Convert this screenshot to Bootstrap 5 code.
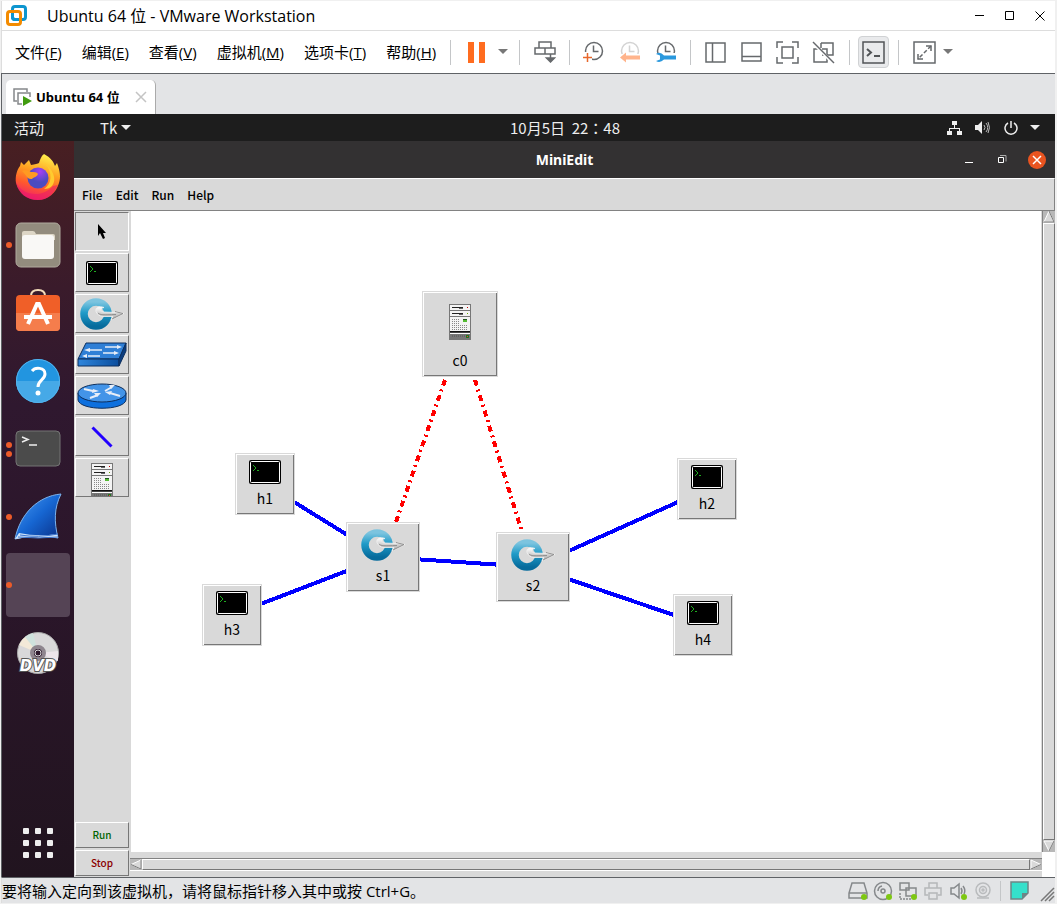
<!DOCTYPE html>
<html lang="zh-CN">
<head>
<meta charset="utf-8">
<meta name="viewport" content="width=device-width, initial-scale=1">
<title>Ubuntu 64 位 - VMware Workstation</title>
<link href="https://cdn.jsdelivr.net/npm/bootstrap@5.3.0/dist/css/bootstrap.min.css" rel="stylesheet">
<style>
:root{--tkbg:#d9d9d9;--win:"Open Sans","Noto Sans CJK SC",sans-serif;--gnome:"Noto Sans CJK SC",sans-serif}
body{background:#f0f0f0;font-family:var(--win);font-size:15px;line-height:20px;color:#000}
svg{display:block;flex:none}
button{background:none;border:0;padding:0;color:inherit}
.vm-app{margin-right:2px;margin-left:1px;padding:1px 0}
.vm-top{background:#fff;border-left:1px solid #ddd}
.vm-title{height:29px;padding-left:4px}
.vm-title .cap{padding-left:20px;font-size:16px}
.cap-btn{width:30px;height:28px;display:grid;place-items:center}
.vm-bar{height:43px;border-top:1px solid #ddd;padding-left:13px}
.vm-menu{gap:20px;width:435px}
.vm-menu a{color:#000;text-decoration:none;white-space:nowrap}
.vm-tools{color:#66696c}
.vr-line{width:1px;height:25px;background:#c4c6c8;flex:none}
.vr-line.wide{margin:0 6px}
.vr-line.last{margin:0 10px 0 9px}
.vr-line.short{height:20px;margin:0 1px 0 5px}
.tb{height:32px;display:grid;place-items:center;flex:none}
.w36{width:36px}.w31{width:31px}.w16{width:16px}.w41{width:41px}
.tb.on{background:#e9eaec;border:1px solid #d0d2d4;border-radius:4px}
.vm-body{border-left:1px solid #5f6266;border-top:1px solid #5f6266}
.vm-tabs{height:40px;background:#e3e4e6;padding:6px 0 0 4px}
.vm-tab{background:#fff;border-right:1px solid #aaa;border-radius:5px 5px 0 0;width:150px;height:34px;padding:0 8px 0 7px;font:bold 13px/20px "Noto Sans","Noto Sans CJK SC",sans-serif}
.g-top{height:27px;background:#1d1d1d;color:#eee;font:15px/20px var(--gnome);padding:0 15px 0 12px}
.g-top time{font-family:"Noto Sans CJK TC",sans-serif;white-space:pre}
.tray{gap:12px}
.g-side{flex:1 1 0}
.g-side.lead-in{flex-basis:76px}
.dock{width:72px;padding:4px 4px 2px;gap:4px;background:linear-gradient(#481f22,#3a1b2b 20%,#2f182f 36%,#2b162a 60%,#21141f)}
.dock-item{position:relative;width:64px;height:64px;display:grid;place-items:center;border-radius:4px}
.dock-item svg{overflow:visible}
.dock-item.active{background:#554455}
.dots{position:absolute;left:0;top:0;height:100%;display:flex;flex-direction:column;justify-content:center;gap:3px}
.dots i{width:6px;height:6px;border-radius:50%;background:#ec5b29}
.me-title{height:37px;background:#333132;color:#fff;font:bold 14px/20px "Noto Sans",sans-serif;padding:0 8px}
.me-btns{gap:24px}
.me-close{margin-left:-4px}
.me-menu{height:33px;background:var(--tkbg);border-top:1px solid #fff;border-bottom:1px solid #828282;border-right:1px solid #828282;padding-left:8px;gap:13px;font:500 12px/18px var(--gnome)}
.me-menu a{color:#000;text-decoration:none}
.tools{width:57px;background:var(--tkbg);padding:1px 2px 1px 1px;gap:2px}
.tool{height:39px;border:1px solid;border-color:#fff #777 #777 #fff;display:grid;place-items:center;background:var(--tkbg);overflow:hidden}
.tool.sunken{border-color:#777 #fff #fff #777}
.tool.act{height:26px;font:500 10px/16px var(--gnome)}
.tool.srv{place-items:start center;padding-top:4px}
.act.run{color:#006400}
.act.stop{color:#8b0000}
.topo{position:relative;background:#fff;min-height:460px;border-right:1px solid var(--tkbg);overflow:hidden}
.node{position:absolute;border:1px solid var(--tkbg);background:var(--tkbg);box-shadow:inset 1px 1px #fff,inset -1px -1px #777;display:flex;flex-direction:column;align-items:center;font:14px/20px var(--gnome)}
.host{width:60px;height:62px;padding-top:6px;gap:4px}
.sw{width:74px;height:70px;padding-top:6px;gap:4px}
.ctl{width:76px;height:86px;padding-top:12px;gap:10px}
.vscroll{width:13px;background:#b8b8b8;border-left:1px solid #828282}
.hscroll{height:25px;background:var(--tkbg)}
.corner{width:13px}
.hs-in{height:13px;margin-top:6px;margin-left:-1px;background:#b8b8b8;border-top:1px solid #828282;border-bottom:1px solid #fff}
.thumb{background:var(--tkbg);border:1px solid;border-color:#fff #777 #777 #fff}
.vm-status{height:26px;background:#e3e4e6;border-top:1px solid #5f6266;border-left:1px solid #ddd}
.vm-devices{color:#85888b}
.st{width:25px;height:22px;display:grid;place-items:center}
</style>
</head>
<body>
<svg width="0" height="0" class="position-absolute" aria-hidden="true">
 <defs>
  <linearGradient id="ringG" x1="0" y1="0" x2="0" y2="1"><stop offset="0" stop-color="#7cc4df"/><stop offset=".45" stop-color="#1f9bc8"/><stop offset="1" stop-color="#066b9c"/></linearGradient>
  <linearGradient id="arrG" x1="0" y1="0" x2="0" y2="1"><stop offset="0" stop-color="#fff"/><stop offset="1" stop-color="#a5a5a5"/></linearGradient>
  <linearGradient id="blueG" x1="0" y1="0" x2="1" y2="0"><stop offset="0" stop-color="#2f86dc"/><stop offset="1" stop-color="#0b4d9d"/></linearGradient>
  <linearGradient id="finG" x1="0" y1="0" x2="1" y2="1"><stop offset="0" stop-color="#4a9df5"/><stop offset=".5" stop-color="#1666d2"/><stop offset="1" stop-color="#0a2f86"/></linearGradient>
  <linearGradient id="fxG" x1=".7" y1="0" x2=".4" y2="1"><stop offset="0" stop-color="#fff44f"/><stop offset=".4" stop-color="#ffa021"/><stop offset=".7" stop-color="#ff5a2c"/><stop offset="1" stop-color="#f01f6c"/></linearGradient>
  <radialGradient id="globeG" cx=".6" cy=".2"><stop offset="0" stop-color="#a73df5"/><stop offset="1" stop-color="#4c4bc0"/></radialGradient>
  <symbol id="host" viewBox="0 0 32 24"><rect width="32" height="24" rx="2" fill="#000"/><rect x="1.500" y="1.500" width="29" height="21" rx="1" fill="none" stroke="#fff"/><path d="M4 5l3 3-3 3M8 10.500h2" fill="none" stroke="#1fae1f"/></symbol>
  <symbol id="ofsw" viewBox="0 0 46 32"><circle cx="17" cy="16" r="12" fill="none" stroke="url(#ringG)" stroke-width="7.500"/><path d="M25 9.500c-5-2-9 0-8 4 1 3 4 5 7 5h10l-2 3.500 13-6.500-8-2 1 1-13-.5c-4 0-4-4 0-4.500z" fill="url(#arrG)" stroke="#f2f2f2" stroke-width=".8"/><path d="M19 15c2 2 5 2 18 1.500M33 21l11-5.500M36 13.500l8 2" fill="none" stroke="#888" stroke-width=".9"/></symbol>
  <symbol id="server" viewBox="0 0 22 36"><path d="M0 0h22v36H0z" fill="#777"/><path d="M1 1h20v5H1zM1 7h20v5H1zM1 13h20v14H1z" fill="#f4f4f4"/><path d="M3 3.500h11M3 9.500h11" stroke="#222"/><path d="M10 4.500h4M10 10.500h4" stroke="#666"/><path d="M18 3h1v1h-1z" fill="#b00"/><path d="M18 9h1v1h-1z" fill="#6a0"/><path d="M3 15.500h8M3 17.500h8M3 19.500h8M3 21.500h16M3 23.500h16M3 25.500h16" stroke="#888" stroke-dasharray="1 1"/><path d="M14 15h4v3h-4z" fill="#5b3"/><path d="M14 15h4v1h-4z" fill="#252"/><path d="M1 27h20v1.500H1z" fill="#111"/><path d="M1 29h20v1H1z" fill="#fff"/><path d="M3 32h15" stroke="#555" stroke-dasharray="1 1"/><path d="M17 31h3v3h-3z" fill="#272"/><path d="M18 32h1v1h-1z" fill="#f33"/></symbol>
  <symbol id="clock" viewBox="0 0 22 22"><circle cx="11" cy="10" r="8.500" fill="none" stroke="currentColor" stroke-width="1.500"/><path d="M10.500 4.500v6h5" fill="none" stroke="currentColor" stroke-width="1.500"/></symbol>
 </defs>
</svg>

<div class="vm-app min-vh-100 d-flex flex-column">
 <header class="vm-top">
  <div class="vm-title d-flex align-items-center">
   <svg width="21" height="21" viewBox="0 0 21 21" fill="none" stroke-width="3"><rect x="6.500" y="1.500" width="13" height="13" rx="2.500" stroke="#0d95cf"/><rect x="1.500" y="6.500" width="13" height="13" rx="2.500" stroke="#f38b00"/><path d="M6.500 9v3q0 2.500 2.500 2.500h3" stroke="#0d95cf"/></svg>
   <span class="cap flex-grow-1">Ubuntu 64 位 - VMware Workstation</span>
   <button class="cap-btn" aria-label="最小化"><svg width="10" height="10"><path d="M0 4.500h9" stroke="#000"/></svg></button>
   <button class="cap-btn" aria-label="最大化"><svg width="10" height="10"><path d="M.5.5h8v8h-8z" fill="none" stroke="#000"/></svg></button>
   <button class="cap-btn" aria-label="关闭"><svg width="10" height="10"><path d="M.5.5l9 9m0-9l-9 9" stroke="#000"/></svg></button>
  </div>
  <div class="vm-bar d-flex align-items-center">
   <nav class="vm-menu d-flex flex-shrink-0">
    <a href="#">文件(<u>F</u>)</a><a href="#">编辑(<u>E</u>)</a><a href="#">查看(<u>V</u>)</a><a href="#">虚拟机(<u>M</u>)</a><a href="#">选项卡(<u>T</u>)</a><a href="#">帮助(<u>H</u>)</a>
   </nav>
   <div class="vm-tools d-flex align-items-center flex-shrink-0">
    <span class="vr-line"></span>
    <button class="tb w36 ms-2" aria-label="暂停"><svg width="18" height="21"><path d="M0 0h6v21H0zM11 0h6v21h-6z" fill="#ff6c1f"/></svg></button>
    <button class="tb w16 me-1" aria-label="电源选项"><svg width="10" height="6"><path d="M0 0h10L5 5z" fill="#777"/></svg></button>
    <span class="vr-line ms-1"></span>
    <button class="tb w41 mx-1" aria-label="发送 Ctrl+Alt+Del"><svg width="22" height="22" fill="none" stroke="currentColor" stroke-width="1.500"><path d="M5 1h12v6H5zM1 7h20v6H1zM11 7v6"/><path d="M16.500 13v7M12.500 17l4 4 4-4z" fill="currentColor"/></svg></button>
    <span class="vr-line wide ms-0"></span>
    <button class="tb w36" aria-label="拍摄快照"><svg width="22" height="22"><use href="#clock" width="22" height="22"/><path d="M0 11h9v10H0z" fill="#fff"/><path d="M4.500 12v9M0 16.500h9" stroke="#e8672c" stroke-width="1.500"/></svg></button>
    <button class="tb w36" aria-label="恢复快照"><svg width="22" height="22"><g color="#d3d3d3"><use href="#clock" width="22" height="22"/></g><path d="M0 13h22v8H0z" fill="#fff"/><path d="M1 16.500l6-5v3h14v4H7v3z" fill="#ffb48c"/></svg></button>
    <button class="tb w36" aria-label="管理快照"><svg width="22" height="22"><use href="#clock" width="22" height="22"/><path d="M0 12h22v9H0z" fill="#fff"/><path d="M1 13q4-3 8 1.500h12v4H9q-4 4-8 1.500l4-1.500v-4z" fill="#2a98dd"/></svg></button>
    <span class="vr-line wide"></span>
    <button class="tb w36" aria-label="显示库"><svg width="21" height="21" fill="none" stroke="currentColor" stroke-width="1.500"><path d="M1 1h19v19H1zM7.500 1v19"/></svg></button>
    <button class="tb w36" aria-label="缩略图栏"><svg width="21" height="21" fill="none" stroke="currentColor" stroke-width="1.500"><path d="M1 1h19v18H1zM1 14.500h19"/></svg></button>
    <button class="tb w36" aria-label="全屏"><svg width="23" height="23" fill="none" stroke="currentColor" stroke-width="1.500"><path d="M6 6h11v11H6zM1 7V1h6M16 1h6v6M22 16v6h-6M7 22H1v-6"/></svg></button>
    <button class="tb w36" aria-label="Unity 模式"><svg width="23" height="23" fill="none" stroke="currentColor" stroke-width="1.500"><path d="M9 2h12v12h-6M7 8H2v13h13v-7M9 2v5M10 8h5v6h-5"/><path d="M0 1l22 22" stroke="#fff" stroke-width="3"/><path d="M1 1l21 21"/></svg></button>
    <span class="vr-line mx-2"></span>
    <button class="tb w31 on" aria-label="控制台视图"><svg width="23" height="23" fill="none" stroke="#515457" stroke-width="2"><path d="M1 1h21v21H1z" stroke-width="1.500"/><path d="M5 8l4 3.500L5 15M12 15h6"/></svg></button>
    <span class="vr-line last"></span>
    <button class="tb w31" aria-label="拉伸客户机"><svg width="23" height="23" fill="none" stroke="currentColor" stroke-width="1.500"><path d="M1 1h21v21H1z"/><path d="M13 5h5v5M10 18H5v-5"/><path d="M18 5L5 18" stroke-dasharray="4 2"/></svg></button>
    <button class="tb w16" aria-label="拉伸选项"><svg width="10" height="6"><path d="M0 0h10L5 5z" fill="#777"/></svg></button>
   </div>
  </div>
 </header>

 <main class="vm-body flex-grow-1 d-flex flex-column">
  <div class="vm-tabs d-flex">
   <div class="vm-tab d-flex align-items-center">
    <svg width="19" height="18" fill="none" stroke="#85888b" stroke-width="1.500"><path d="M4 13H1V1h13v3"/><path d="M9 16H5V5h12v4"/><path d="M10 8l9 5-9 5z" fill="#419c10" stroke="none"/></svg>
    <span class="flex-grow-1 ps-1">Ubuntu 64 位</span>
    <button aria-label="关闭选项卡"><svg width="12" height="12"><path d="M1 1l10 10m0-10L1 11" stroke="#c4c4c4" stroke-width="1.500"/></svg></button>
   </div>
  </div>
  <div class="g-top d-flex align-items-center">
   <div class="g-side lead-in d-flex align-items-center"><span>活动</span><button class="d-flex align-items-center gap-1 ms-5 ps-2">Tk<svg width="10" height="5"><path d="M0 0h10L5 5z" fill="#eee"/></svg></button></div>
   <time lang="zh-Hant">10月5日  22：48</time>
   <div class="tray g-side d-flex align-items-center justify-content-end">
    <svg width="15" height="14" fill="#eee"><path d="M5 0h5v4H8v3h5v3h2v4h-5v-4h2V8H3v2h2v4H0v-4h2V7h5V4H5z"/></svg>
    <svg width="18" height="14" fill="#eee"><path d="M1 4h3l4-4v13L4 9H1z"/><path d="M10 4q2 2.500 0 5M12 2q3.500 4.500 0 9M14 1q3 5.500 0 11" fill="none" stroke="#bbb"/></svg>
    <svg width="14" height="14" fill="none" stroke="#eee" stroke-width="1.500"><path d="M4 2a6 6 0 1 0 6 0M7 0v7"/></svg>
    <svg width="10" height="5"><path d="M0 0h10L5 5z" fill="#eee"/></svg>
   </div>
  </div>
  <div class="flex-grow-1 d-flex">
   <nav class="dock d-flex flex-column flex-shrink-0">
    <button class="dock-item" aria-label="Firefox"><svg width="46" height="48" viewBox="0 0 46 48"><path d="M29 1c7 4 9 7 11 12l2-3c3 8 4 14 2 20-3 10-11 17-21 17S4 41 1 30c-1-7 1-13 4-17l1-4 3 3 5-5 2 5c4-1 7-1 8-2 1-3 2-7 5-9z" fill="url(#fxG)"/><path d="M1 29c5 12 24 18 37 4l5-1c-5 11-13 15-20 15C11 47 3 40 1 29z" fill="#e9176a" opacity=".55"/><circle cx="23" cy="25" r="10.500" fill="url(#globeG)"/><path d="M30 10c8 10 7 21-1 26 12 0 15-14 1-26z" fill="#ffcb2f"/><path d="M7 18c3-2 7 0 9 1 3 0 6 0 7 2-1 3-4 3-6 5-5 1-6-5-10-8z" fill="#ff9a22"/></svg></button>
    <button class="dock-item" aria-label="文件"><span class="dots"><i></i></span><svg width="46" height="46"><rect x="1" y="1" width="44" height="44" rx="5" fill="#938c7e" stroke="#b0aa9e"/><path d="M7 11q0-2 2-2h9q2 0 3 3h17q2 0 2 2v4H7z" fill="#ddd6c6"/><rect x="7" y="13" width="32" height="24" rx="3" fill="#f9f8f6"/></svg></button>
    <button class="dock-item" aria-label="Ubuntu Software"><svg width="46" height="46" viewBox="0 3 46 46"><path d="M16 11V9q0-6 7-6t7 6v2" fill="none" stroke="#f4ddba" stroke-width="2"/><rect x="1" y="8" width="44" height="36" rx="4" fill="#f05f28"/><path d="M1 26h44v14q0 4-4 4H5q-4 0-4-4z" fill="#f57d4c"/><path d="M13 37l9-20h2l9 20M9 30h28" fill="none" stroke="#fff" stroke-width="4"/></svg></button>
    <button class="dock-item" aria-label="帮助"><svg width="46" height="46"><circle cx="23" cy="23" r="22" fill="#2295e0"/><path d="M1 23a22 22 0 0 0 44 0z" fill="#46a9e7"/><circle cx="23" cy="23" r="21.500" fill="none" stroke="#54b2ec"/><path d="M17 13c3-4 13-4 13 3 0 6-7 6-7 13" fill="none" stroke="#fff" stroke-width="3"/><circle cx="23" cy="35" r="2.500" fill="#fff"/></svg></button>
    <button class="dock-item" aria-label="终端"><span class="dots"><i></i><i></i></span><svg width="46" height="38"><rect x="1" y="1" width="44" height="35" rx="4" fill="#4b4b4b" stroke="#747474"/><path d="M7 7l6 2.500L7 12M14 15h8" fill="none" stroke="#eee" stroke-width="1.500"/></svg></button>
    <button class="dock-item" aria-label="Wireshark"><span class="dots"><i></i></span><svg width="48" height="48"><path d="M1 46C6 21 24 3 47 1c-7 14-7 28-3 44q-22-5-43 1z" fill="url(#finG)" stroke="#7db4ee"/><path d="M1 46l4-6q19 4 38 1l1 4-9-1-9 1-9-1-9 1z" fill="#cfe3fa"/><path d="M6 42q18 3 38-1M4 44q20 2 40 0" stroke="#3c75ce" fill="none"/></svg></button>
    <button class="dock-item active" aria-label="MiniEdit"><span class="dots"><i></i></span></button>
    <button class="dock-item" aria-label="DVD"><svg width="44" height="44"><circle cx="22" cy="22" r="20.500" fill="#d9d8d9" stroke="#aaa"/><path d="M22 22L3 14Q7 6 13 4z" fill="#f3e9d8"/><path d="M22 22L9 6q4-3 8-4z" fill="#cfe2dd"/><path d="M22 22L42 20v10z" fill="#ece4ea"/><circle cx="22" cy="22" r="6" fill="#2b162a" stroke="#8e858e" stroke-width="4"/><circle cx="22" cy="22" r="3" fill="#2b162a" stroke="#ddd"/><text x="22" y="40" text-anchor="middle" font-family="DejaVu Sans" font-size="15" font-weight="bold" font-style="italic" fill="#fff" stroke="#555" stroke-width="2" paint-order="stroke">DVD</text></svg></button>
    <button class="dock-item mt-auto" aria-label="显示应用程序"><svg width="30" height="30" fill="#eee"><path id="row" d="M1 0h4q1 0 1 1v4q0 1-1 1H1q-1 0-1-1V1q0-1 1-1zM13 0h4q1 0 1 1v4q0 1-1 1h-4q-1 0-1-1V1q0-1 1-1zM25 0h4q1 0 1 1v4q0 1-1 1h-4q-1 0-1-1V1q0-1 1-1z"/><use href="#row" y="12"/><use href="#row" y="24"/></svg></button>
   </nav>

   <section class="flex-grow-1 d-flex flex-column">
    <div class="me-title d-flex align-items-center">
     <span class="g-side"></span><span>MiniEdit</span>
     <div class="me-btns g-side d-flex align-items-center justify-content-end">
      <button aria-label="最小化"><svg width="9" height="9"><path d="M0 7.500h8" stroke="#fff"/></svg></button>
      <button aria-label="还原"><svg width="9" height="9" fill="none" stroke="#fff"><path d="M.5 2.500h5v5h-5z"/><path d="M2 .5h6v6" stroke="#aaa"/></svg></button>
      <button class="me-close" aria-label="关闭"><svg width="20" height="20"><circle cx="10" cy="10" r="9" fill="#e95420"/><path d="M6 6l8 8m0-8l-8 8" stroke="#fff" stroke-width="1.500"/></svg></button>
     </div>
    </div>
    <nav class="me-menu d-flex align-items-center"><a href="#">File</a><a href="#">Edit</a><a href="#">Run</a><a href="#">Help</a></nav>
    <div class="flex-grow-1 d-flex">
     <div class="tools d-flex flex-column flex-shrink-0">
      <button class="tool sunken" aria-label="选择"><svg width="10" height="16"><path d="M1 0v12l2-3 3 6 2-1-2-5h3z" fill="#000"/></svg></button>
      <button class="tool" aria-label="主机"><svg width="32" height="24"><use href="#host"/></svg></button>
      <button class="tool" aria-label="交换机"><svg width="46" height="32"><use href="#ofsw"/></svg></button>
      <button class="tool" aria-label="传统交换机"><svg width="50" height="26"><path d="M9 1h40l-7 16H1z" fill="#2f7fd6" stroke="#0d2f5e"/><path d="M1 17h41v7H1z" fill="url(#blueG)" stroke="#0d2f5e"/><path d="M42 17l7-16v8l-7 15z" fill="#0a3d80" stroke="#0d2f5e"/><path d="M12 8h13M28 5h13M11 14h12M26 11h12" stroke="#e8eef8" stroke-width="1.500"/><path d="M13 6v4L7 8zM40 3v4l5-2zM10 12v4l-5-2zM37 9v4l5-2z" fill="#e8eef8"/></svg></button>
      <button class="tool" aria-label="传统路由器"><svg width="50" height="26"><path d="M1 10v7c2 11 46 11 48 0v-7z" fill="#0d70de" stroke="#0d2f5e"/><ellipse cx="25" cy="10" rx="24" ry="9" fill="#4394e8" stroke="#0d2f5e"/><path d="M7 6l9 2M28 8l7-4M13 15l8-3M43 13l-10-3" stroke="#e8eef8" stroke-width="2"/><path d="M16 6l6 2-7 2zM32 2h6l-4 4zM17 10h7l-4 4zM28 9l7-1-2 4z" fill="#e8eef8"/></svg></button>
      <button class="tool" aria-label="链路"><svg width="22" height="22"><path d="M1.500 1.500l19 19" stroke="#20f" stroke-width="3"/></svg></button>
      <button class="tool srv" aria-label="控制器"><svg width="22" height="36"><use href="#server"/></svg></button>
      <button class="tool act run mt-auto">Run</button>
      <button class="tool act stop">Stop</button>
     </div>
     <div class="flex-grow-1 d-flex flex-column">
      <div class="flex-grow-1 d-flex">
       <div class="topo flex-grow-1">
        <svg width="100%" height="100%" class="position-absolute" fill="none" stroke="#00f" stroke-width="4" shape-rendering="crispEdges">
         <path d="M134 273L252 346L101 404M252 346L402 356L576 278M402 356L572 414"/>
         <path d="M314 169L265 311M344 169L390 318" stroke="#f00" stroke-dasharray="6 4 2 4"/>
        </svg>
        <div class="node ctl" style="left:291px;top:80px"><svg width="22" height="36"><use href="#server"/></svg>c0</div>
        <div class="node host" style="left:104px;top:242px"><svg width="32" height="24"><use href="#host"/></svg>h1</div>
        <div class="node host" style="left:546px;top:247px"><svg width="32" height="24"><use href="#host"/></svg>h2</div>
        <div class="node host" style="left:71px;top:373px"><svg width="32" height="24"><use href="#host"/></svg>h3</div>
        <div class="node host" style="left:542px;top:383px"><svg width="32" height="24"><use href="#host"/></svg>h4</div>
        <div class="node sw" style="left:215px;top:311px"><svg width="46" height="32"><use href="#ofsw"/></svg>s1</div>
        <div class="node sw" style="left:365px;top:321px"><svg width="46" height="32"><use href="#ofsw"/></svg>s2</div>
       </div>
       <div class="vscroll d-flex flex-column">
        <svg width="12" height="12"><path d="M6 0l5 11H1z" fill="#d9d9d9" stroke="#fff"/><path d="M6 0l5 11H1" fill="none" stroke="#777"/></svg>
        <div class="thumb flex-grow-1"></div>
        <svg width="12" height="12"><path d="M6 11L1 1h10z" fill="#d9d9d9" stroke="#fff"/><path d="M11 1L6 11" stroke="#777"/></svg>
       </div>
      </div>
      <div class="d-flex">
       <div class="hscroll flex-grow-1"><div class="hs-in d-flex">
        <svg width="12" height="11"><path d="M1 5.500L11 1v9z" fill="#d9d9d9" stroke="#fff"/><path d="M1 5.500L11 10V1" fill="none" stroke="#777"/></svg>
        <div class="thumb flex-grow-1"></div>
        <svg width="12" height="11"><path d="M11 5.500L1 1v9z" fill="#d9d9d9" stroke="#fff"/><path d="M1 10l10-4.500" stroke="#777"/></svg>
       </div></div>
       <div class="corner bg-white"></div>
      </div>
     </div>
    </div>
   </section>
  </div>
 </main>

 <footer class="vm-status d-flex align-items-center">
  <span class="flex-grow-1 text-nowrap">要将输入定向到该虚拟机，请将鼠标指针移入其中或按 Ctrl+G。</span>
  <div class="vm-devices d-flex align-items-center">
   <span class="st"><svg width="20" height="20" fill="none" stroke="currentColor" stroke-width="1.500"><path d="M4 2h12l3 10v5H1v-5zM1 12h18"/><circle cx="16" cy="16" r="3" fill="#7ec713" stroke="none"/></svg></span>
   <span class="st"><svg width="20" height="20" fill="none" stroke="currentColor" stroke-width="1.500"><circle cx="10" cy="10" r="8.500"/><circle cx="10" cy="10" r="2"/><path d="M5 10q0-4 4-5"/><circle cx="16" cy="16" r="3" fill="#7ec713" stroke="none"/></svg></span>
   <span class="st"><svg width="20" height="20" fill="none" stroke="currentColor" stroke-width="1.500"><path d="M2 2h9v7H2zM8 7h10v8H8z"/><path d="M2 12v6h12" stroke-dasharray="2 1"/><circle cx="16" cy="16" r="3" fill="#7ec713" stroke="none"/></svg></span>
   <span class="st"><svg width="20" height="20" fill="none" stroke="#b5b7b9" stroke-width="1.500"><path d="M6 7V2h8v5M5 14H2V7h16v7h-3M6 12h8v6H6z"/></svg></span>
   <span class="st"><svg width="20" height="20" fill="none" stroke="currentColor" stroke-width="1.500"><path d="M3 7h3l5-4v14l-5-4H3zM13 7q2 3 0 6M15 5q3 4 1 8"/><circle cx="16" cy="16" r="3" fill="#7ec713" stroke="none"/></svg></span>
   <span class="st"><svg width="20" height="20" fill="none" stroke="#b9bbbd" stroke-width="1.500"><circle cx="10" cy="9" r="7"/><circle cx="10" cy="9" r="3.500"/><circle cx="10" cy="9" r="1"/><path d="M4 17h12"/></svg></span>
   <span class="vr-line short"></span>
   <svg class="ms-2" width="19" height="19"><path d="M1 1h17v11l-6 6H1z" fill="#35e0cb" stroke="#6d8586" stroke-width="1.500"/><path d="M18 12h-6v6z" fill="#6d8586"/></svg>
   <svg class="ms-2 align-self-end" width="18" height="18" stroke="#777"><path d="M4 17L17 4M8 17l9-9M12 17l5-5" stroke-width="1.500"/></svg>
  </div>
 </footer>
</div>
<script src="https://cdn.jsdelivr.net/npm/bootstrap@5.3.0/dist/js/bootstrap.bundle.min.js"></script>
</body>
</html>
